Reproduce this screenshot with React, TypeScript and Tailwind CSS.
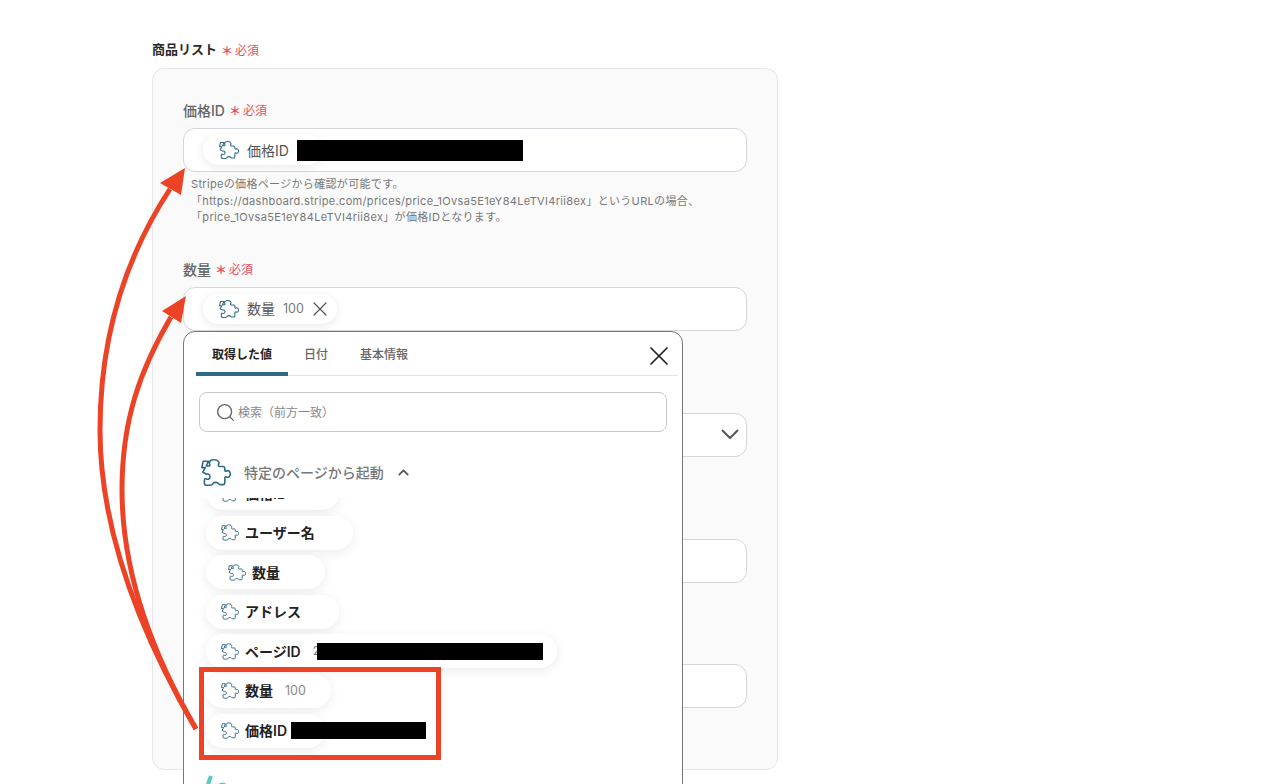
import React from 'react';
import { X, Search, ChevronUp } from 'lucide-react';

const font = { fontFamily: 'Inter, "Noto Sans CJK JP", sans-serif' };

function Puzzle({ className }: { className: string }) {
  return (
    <svg viewBox="0 0 30 27" fill="none" stroke="#2f6a85" strokeWidth="1.6" strokeLinejoin="round" className={className}>
      <path d="M9 6.5C8 4 8 .8 13 .8C18 .8 18.5 4 17.5 5.5C17 6.5 17.5 7.5 19 7.5H22C23.2 7.5 23.8 8.2 23.8 9.5V11C23.8 12.2 24.5 12.5 25.5 12C27.5 11 29.3 12.5 29.3 15C29.3 17.5 27.5 19 25.5 18C24.5 17.5 23.8 17.8 23.8 19V23.5C23.8 25 23 25.6 22 25.6H19C17.6 25.6 17.4 23.5 15 23.4C13 23.3 12 24 11.5 25.2C11.1 26 10.4 26.2 9 26.2H5.5C4 26.2 3.4 25.5 3.4 24.2V21C3.4 19.8 4.5 19.5 5.5 20C7.5 20.8 9.2 19.5 9 17.4C8.8 15.5 7 14.5 5.5 15.2L1.8 13.2L4.2 8.6H.8L2.2 2.2H7.5L5.2 7H8L9 6.5Z" />
    </svg>
  );
}

function Required() {
  return (
    <span className="flex items-center gap-[2px] ml-[1px] pt-[1px] text-[12px] font-normal text-[#e8505b] whitespace-nowrap">
      <span className="text-[12px] font-bold leading-none mt-[2px]">＊</span>
      必須
    </span>
  );
}

function Field({ className = '', children }: { className?: string; children?: React.ReactNode }) {
  return (
    <div className={`flex items-center w-[564px] h-[44px] pl-[19px] bg-white border border-[#d3d6da] rounded-[12px] ${className}`}>
      {children}
    </div>
  );
}

function InputChip({ className, children }: { className: string; children: React.ReactNode }) {
  return (
    <div className={`flex items-center h-[30px] pl-[16px] bg-white rounded-full shadow-[0_2px_10px_rgba(0,0,0,0.09)] text-[14px] text-[#555] whitespace-nowrap ${className}`}>
      <Puzzle className="w-[20px] h-[18px] shrink-0 mr-[8px]" />
      {children}
    </div>
  );
}

function ListChip({ label, className, pad = 'pl-[15px]', children }: { label: string; className: string; pad?: string; children?: React.ReactNode }) {
  return (
    <div className={`flex items-center h-[34px] shrink-0 ${pad} bg-white rounded-full shadow-[0_3px_12px_rgba(0,0,0,0.08)] text-[14px] font-semibold text-[#222] whitespace-nowrap ${className}`}>
      <Puzzle className="w-[18px] h-[17px] shrink-0 mr-[6px]" />
      <span className="shrink-0">{label}</span>
      {children}
    </div>
  );
}

function Redacted({ className }: { className: string }) {
  return <span className={`block shrink-0 bg-black ${className}`} />;
}

export default function App() {
  return (
    <div className="relative w-[1286px] h-[784px] overflow-hidden bg-white pl-[152px] pt-[41px]" style={font}>
      <div className="flex items-center gap-[3px] h-[18px] text-[13px] font-semibold text-[#2a2a2a]">
        商品リスト
        <Required />
      </div>

      {/* form panel */}
      <div className="mt-[9px] w-[626px] h-[702px] pl-[30px] pt-[32px] bg-[#fafafa] border border-[#e6e6e6] rounded-[12px]">
        <div className="flex items-center gap-[3px] h-[18px] text-[14px] font-medium text-[#666]">
          価格ID
          <Required />
        </div>
        <Field className="mt-[9px]">
          <InputChip className="w-[120px]">
            価格ID
            <Redacted className="w-[226px] h-[21px] ml-[8px]" />
          </InputChip>
        </Field>
        <div className="mt-[4px] pl-[8px] text-[11px] leading-[16.5px] tracking-[0.33px] text-[#777] whitespace-nowrap">
          <p>Stripeの価格ページから確認が可能です。</p>
          <p>「https://dashboard.stripe.com/prices/price_1Ovsa5E1eY84LeTVI4rii8ex」というURLの場合、</p>
          <p>「price_1Ovsa5E1eY84LeTVI4rii8ex」が価格IDとなります。</p>
        </div>

        <div className="mt-[35px] flex items-center gap-[3px] h-[18px] text-[14px] font-medium text-[#666]">
          数量
          <Required />
        </div>
        <Field className="mt-[8px]">
          <InputChip className="w-[134px]">
            数量
            <span className="ml-[8px] pt-[1px] text-[12.5px] text-[#777]">100</span>
            <X className="ml-[4px] w-[24px] h-[24px] shrink-0 text-[#555]" strokeWidth={1.2} />
          </InputChip>
        </Field>
        <Field className="mt-[82px] justify-end pr-[7px]">
          <svg viewBox="0 0 18 11" fill="none" stroke="#555" strokeWidth="2" className="w-[18px] h-[11px]">
            <path d="M1 1L9 9L17 1" />
          </svg>
        </Field>
        <Field className="mt-[82px]" />
        <Field className="mt-[81px]" />
      </div>

      {/* value picker popup */}
      <div className="absolute left-[183px] top-[331px] w-[500px] h-[470px] bg-white border border-[#777] rounded-t-[12px] text-[#666]">
        <div className="relative flex items-start h-[44px] ml-[12px] mr-[4px] border-b border-[#e5e5e5] text-[12px] font-medium whitespace-nowrap">
          <span className="w-[92px] h-[44px] pt-[14px] text-center font-semibold text-[#222] border-b-[4px] border-[#2f6a85] rounded-t-[4px]">取得した値</span>
          <span className="ml-[16px] pt-[14px]">日付</span>
          <span className="ml-[32px] pt-[14px]">基本情報</span>
          <X className="absolute right-[3px] top-[8px] w-[32px] h-[32px] text-[#222]" strokeWidth={1.3} />
        </div>
        <div className="flex items-center ml-[15px] mt-[16px] w-[468px] h-[40px] pl-[15px] border border-[#c9c9c9] rounded-[8px] text-[12px] text-[#888]">
          <Search className="w-[21px] h-[21px] shrink-0 text-[#666] mr-[2px]" strokeWidth={1.5} />
          <span className="pt-[1px]">検索（前方一致）</span>
        </div>
        <div className="flex items-center ml-[17px] mt-[25px] h-[30px] text-[14px] font-medium text-[#777] whitespace-nowrap">
          <Puzzle className="w-[30px] h-[27px] shrink-0 mr-[13px]" />
          特定のページから起動
          <ChevronUp className="ml-[11px] w-[17px] h-[17px] text-[#555]" strokeWidth={2.4} />
        </div>

        <div className="flex flex-col gap-[5.6px] h-[300px] mt-[11px] pl-[22px] overflow-hidden">
          <ListChip label="価格ID" className="w-[133px] -mt-[22px]" />
          <ListChip label="ユーザー名" className="w-[147px]" />
          <ListChip label="数量" className="w-[119px]" pad="pl-[22px]" />
          <ListChip label="アドレス" className="w-[133px]" />
          <ListChip label="ページID" className="w-[351px]">
            <span className="ml-[12px] w-[4px] text-[12px] font-normal text-[#777]">2</span>
            <Redacted className="w-[226px] h-[17px]" />
          </ListChip>
          <ListChip label="数量" className="w-[125px]">
            <span className="ml-[12px] text-[12.5px] font-normal text-[#888]">100</span>
          </ListChip>
          <ListChip label="価格ID" className="w-[119px]">
            <Redacted className="w-[135px] h-[17px] ml-[4px]" />
          </ListChip>
          <svg viewBox="0 0 20 12" className="w-[20px] h-[12px] shrink-0 mt-[22px]" fill="none" stroke="#5cc9c0" strokeWidth="4">
            <path d="M1 12L5 1" />
            <path d="M13 12C14 9 17 9 20 11" />
          </svg>
        </div>
      </div>

      {/* annotations */}
      <div className="absolute left-[199px] top-[667px] w-[242px] h-[93px] border-[5px] border-[#ec4226]" />
      <svg viewBox="0 0 1286 784" className="absolute inset-0 w-[1286px] h-[784px] pointer-events-none" fill="none">
        <path d="M196 729C150 650 100 540 100 430C100 330 130 250 170 189" stroke="#ec4226" strokeWidth="5" />
        <path d="M196 729C150 650 122 570 122 490C122 420 140 370 171 317" stroke="#ec4226" strokeWidth="5" />
        <path d="M185 168L160 183L181 195Z" fill="#ec4226" />
        <path d="M186 296L162 311L181 323Z" fill="#ec4226" />
      </svg>
    </div>
  );
}
